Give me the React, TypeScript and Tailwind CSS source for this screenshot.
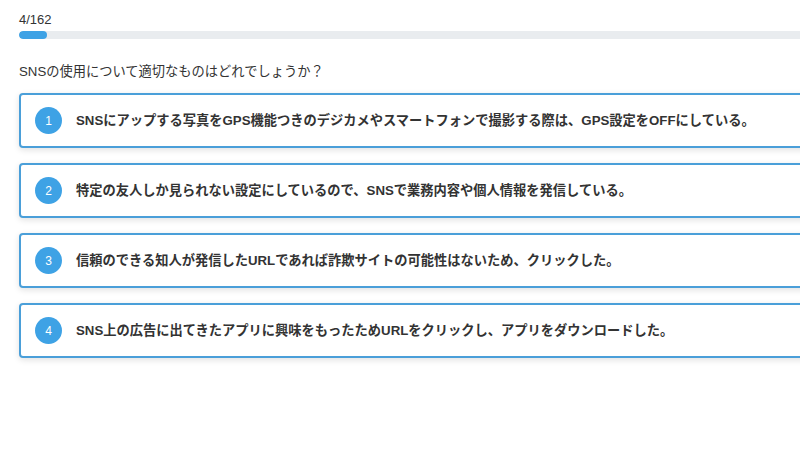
import React from "react";

const options = [
  "SNSにアップする写真をGPS機能つきのデジカメやスマートフォンで撮影する際は、GPS設定をOFFにしている。",
  "特定の友人しか見られない設定にしているので、SNSで業務内容や個人情報を発信している。",
  "信頼のできる知人が発信したURLであれば詐欺サイトの可能性はないため、クリックした。",
  "SNS上の広告に出てきたアプリに興味をもったためURLをクリックし、アプリをダウンロードした。",
];

export default function App() {
  return (
    <div
      className="w-[800px] h-[460px] overflow-hidden bg-white text-[#333]"
      style={{ fontFamily: '"Liberation Sans", "Noto Sans CJK JP", sans-serif' }}
    >
      <div className="w-[840px] pl-[19px] pt-[12px]">
        <div className="text-[13px] leading-[16px]">4/162</div>
        <div className="mt-[3px] h-[8px] w-full rounded-full bg-[#e9ecef] overflow-hidden">
          <div className="h-full w-[28px] rounded-full bg-[#3ea2e5]" />
        </div>
        <div className="mt-[24px] text-[13.25px] leading-[18px]">
          SNSの使用について適切なものはどれでしょうか？
        </div>
        <div className="mt-[12px] flex flex-col gap-[15px]">
          {options.map((t, i) => (
            <div
              key={i}
              className="h-[55px] flex items-center rounded-[4px] border-2 border-[#4a9fd9] bg-white pl-[14px] shadow-[0_2px_6px_rgba(0,0,0,0.12)]"
            >
              <div className="w-[27px] h-[27px] rounded-full bg-[#3ea2e5] text-white flex items-center justify-center text-[12px] shrink-0">
                {i + 1}
              </div>
              <div className="ml-[14px] text-[13.25px] font-bold whitespace-nowrap">{t}</div>
            </div>
          ))}
        </div>
      </div>
    </div>
  );
}
